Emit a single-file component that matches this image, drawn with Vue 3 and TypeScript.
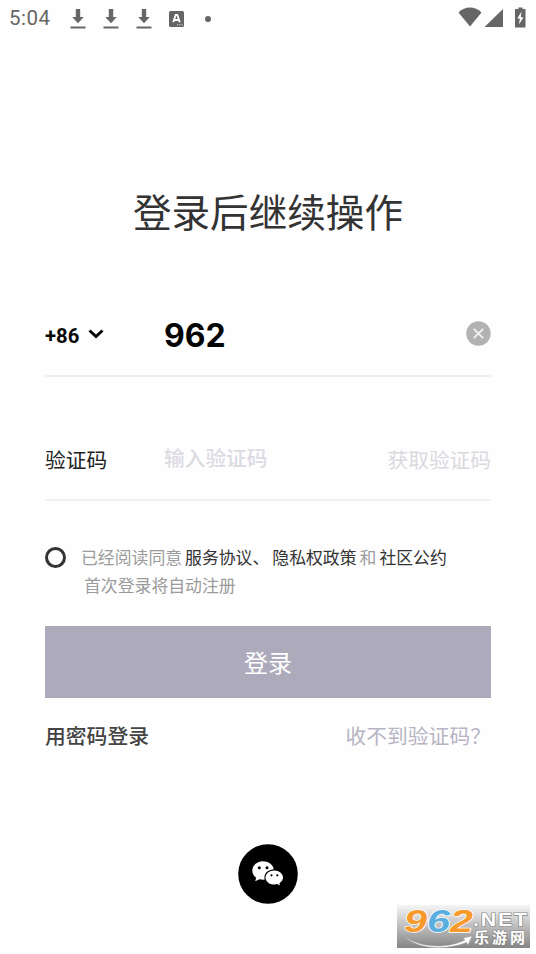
<script setup lang="ts">
import { ref } from 'vue'

const phone = ref<string>('962')
const code = ref<string>('')
const agreed = ref<boolean>(false)
const downloads: number[] = [1, 2, 3]
</script>

<template>
  <main class="screen">
    <header class="status">
      <span class="time">5:04</span>
      <svg v-for="n in downloads" :key="n" class="download" viewBox="0 0 16 22">
        <path d="M5.8 1h4.4v8h3.6L8 15.3 2.2 9h3.6zM0.5 18.6h15v1.8h-15z" fill="#666" />
      </svg>
      <svg class="badge" viewBox="0 0 15 16">
        <rect width="15" height="16" rx="1.6" fill="#666" />
        <path d="M4.200 11.2 6.700 4h1.600l2.500 7.2M5.200 9h4.600" fill="none" stroke="#fff" stroke-width="1.8" />
        <path d="M8 13.8h1.2m1 0h1.2m1 0h1.2" stroke="#ddd" stroke-width="1" />
      </svg>
      <span class="dot"></span>
      <span class="spacer"></span>
      <svg class="signals" viewBox="0 0 70 24">
        <path d="M0.5 6.5C7-.2 17-.2 23.500 6.500L12 20.500z" fill="#666" />
        <path d="M45 3v18H26.500z" fill="#666" />
        <path d="M60.500 1.500h4V3h3v18.500H57V3h3.500z" fill="#666" />
        <path d="m63.500 5.500-4.200 7h2.500l-.8 6 4.500-7.300h-2.700z" fill="#fff" />
      </svg>
    </header>

    <h1 class="title">登录后继续操作</h1>

    <form class="form" @submit.prevent>
      <div class="field phone-field">
        <div class="region">
          <span>+86</span>
          <svg class="chevron" viewBox="0 0 16 10"><path d="m1.500 1.500 6.500 6 6.500-6" fill="none" stroke="#0a0a0a" stroke-width="3" /></svg>
        </div>
        <input v-model="phone" class="input number" aria-label="+86" />
        <svg class="clear" viewBox="0 0 25 25" @click="phone = ''">
          <circle cx="12.500" cy="12.500" r="12.200" fill="#b2b2b2" />
          <path d="m7.800 7.800 9.400 9.400m0-9.400-9.400 9.400" stroke="#f2f2f2" stroke-width="1.800" />
        </svg>
      </div>

      <div class="field code-field">
        <label class="label">验证码</label>
        <input v-model="code" class="input code" placeholder="输入验证码" />
        <span class="get-code">获取验证码</span>
      </div>

      <div class="agreement">
        <span class="radio" @click="agreed = !agreed"></span>
        <div class="terms">
          <p class="line">已经阅读同意<a class="first">服务协议、</a><a class="second">隐私权政策</a><span class="and">和</span><a>社区公约</a></p>
          <p class="line note">首次登录将自动注册</p>
        </div>
      </div>

      <button class="submit">登录</button>
      <div class="links">
        <a class="password">用密码登录</a>
        <a class="help">收不到验证码？</a>
      </div>
    </form>

    <div class="social">
      <svg viewBox="0 0 60 60">
        <circle cx="30" cy="30" r="29.800" fill="#000" />
        <path d="M25 17.300c-6 0-10.700 4-10.700 9.200 0 3 1.500 5.500 3.900 7.200l-1 3.600 4.200-2.100c1.100.3 2.300.5 3.600.5 6 0 10.800-4.100 10.800-9.200S31 17.300 25 17.300z" fill="#fff" />
        <path d="M36.300 25.200c-5.500 0-9.900 3.600-9.900 8.200s4.400 8.300 9.900 8.300c1.100 0 2.100-.1 3-.4l3.500 1.800-.8-3c2.500-1.500 4.100-3.900 4.100-6.700 0-4.600-4.400-8.200-9.800-8.200z" fill="#000" />
        <path d="M36.300 26.400c-4.900 0-8.800 3.200-8.800 7.100s3.900 7.100 8.800 7.100c1.100 0 2.100-.2 3-.5l2.700 1.500-.6-2.400c2.200-1.300 3.600-3.400 3.600-5.700 0-3.900-3.900-7.100-8.700-7.100z" fill="#fff" />
        <g fill="#000">
          <circle cx="21.300" cy="23.800" r="1.500" /><circle cx="29" cy="23.800" r="1.500" />
          <circle cx="33.500" cy="31.300" r="1.100" /><circle cx="39.300" cy="31.300" r="1.100" />
        </g>
      </svg>
    </div>

    <svg class="watermark" viewBox="0 0 133 43">
      <defs>
        <linearGradient id="fade" x1="0" y1="0" x2="0" y2="1">
          <stop offset="0" stop-color="#f5f5f5" /><stop offset="1" stop-color="#858585" />
        </linearGradient>
      </defs>
      <rect width="133" height="43" fill="url(#fade)" />
      <path d="M7 31c15 12 43 13 61 4l-2-2 9-2-4 9-1.500-2.500C48 46 19 44 7 31z" fill="#fff" stroke="#999" stroke-width=".5" />
      <g class="digits" stroke="#fff" stroke-width="1.500" paint-order="stroke" stroke-linejoin="round">
        <text x="7" y="27" textLength="23" lengthAdjust="spacingAndGlyphs" fill="#f79a2b">9</text>
        <text x="30" y="27" textLength="23" lengthAdjust="spacingAndGlyphs" fill="#5aaee0">6</text>
        <text x="53" y="27" textLength="23" lengthAdjust="spacingAndGlyphs" fill="#f79a2b">2</text>
      </g>
      <g fill="#fff" stroke="#858585" stroke-width="1.200" paint-order="stroke">
        <text class="net" x="76" y="20.500" textLength="56" lengthAdjust="spacingAndGlyphs">.NET</text>
        <text class="brand" x="77" y="38" textLength="51">乐游网</text>
      </g>
    </svg>
  </main>
</template>

<style>
body { background: #fefefe; }
</style>

<style scoped>
* { box-sizing: border-box; }
.screen {
  position: relative;
  width: 536px;
  height: 954px;
  overflow: hidden;
  background: #fefefe;
  color: #333;
  font-family: "Noto Sans CJK SC", sans-serif;
}
.status {
  display: flex;
  align-items: center;
  height: 37px;
  padding: 0 8px 0 9px;
}
.time { width: 61px; color: #666; font: 400 20.500px/37px Roboto, sans-serif; letter-spacing: .5px; }
.download { width: 16px; height: 22px; margin-right: 16.900px; }
.badge { width: 15px; height: 16px; margin-right: 21px; }
.dot { width: 6px; height: 6px; border-radius: 50%; background: #666; }
.spacer { flex: 1; }
.signals { width: 70px; height: 24px; margin-top: -2px; }
.title {
  margin: 143px 0 0;
  color: #333;
  font-size: 38.600px;
  font-weight: 400;
  line-height: 60px;
  text-align: center;
}
.form { display: flex; flex-direction: column; margin: 0 45px; }
.field { display: flex; align-items: center; border-bottom: 2px solid #f0f0f0; }
.phone-field { height: 84px; margin-top: 53px; }
.region {
  display: flex;
  align-items: center;
  gap: 9px;
  width: 119px;
  margin-top: 3px;
  color: #0a0a0a;
  font: 700 20.300px/30px Roboto, sans-serif;
}
.chevron { width: 16px; height: 10px; margin-top: -3px; }
.input { flex: 1; min-width: 0; padding: 0; border: 0; outline: 0; background: none; }
.number { height: 40px; margin-top: 3px; color: #050505; font: 700 32px/40px Inter, sans-serif; }
.clear { width: 25px; height: 25px; margin-top: -1px; }
.code-field { height: 80px; margin-top: 44px; padding-bottom: 2px; font-size: 20.700px; }
.label { width: 119px; color: #222; }
.code { height: 32px; margin-top: -4px; font: 500 20.700px/32px "Noto Sans CJK SC", sans-serif; }
.code::placeholder { color: #dcdae3; opacity: 1; }
.get-code { color: #dad9df; }
.agreement { display: flex; height: 125px; padding-top: 42px; }
.radio { width: 21px; height: 21px; margin-top: 4px; border: 3px solid #333; border-radius: 50%; }
.terms { margin-left: 15px; }
.line { margin: 0; color: #9b9b9b; font-size: 16.850px; line-height: 28px; white-space: nowrap; }
.line a { color: #333; }
.first { margin-left: 3px; }
.second { margin-left: 3px; }
.and { margin: 0 3px; }
.note { padding-left: 3px; }
.submit {
  height: 72px;
  padding: 0 0 1px;
  border: 0;
  background: #adaabb;
  color: #fff;
  font: 400 24px/35px "Noto Sans CJK SC", sans-serif;
}
.links { display: flex; justify-content: space-between; margin-top: 21px; font-size: 20.800px; line-height: 32px; }
.password { color: #444; font-weight: 500; }
.help { color: #b7b4c4; }
.social { display: flex; justify-content: center; margin-top: 93px; }
.social svg { width: 60px; height: 60px; }
.watermark { position: absolute; left: 397px; top: 905px; width: 133px; height: 43px; overflow: visible; }
.digits { font: italic 700 32px "Liberation Sans", sans-serif; }
.net { font: 700 17.500px "Liberation Sans", sans-serif; letter-spacing: 1.500px; }
.brand { font: 700 15px "Noto Sans CJK SC", sans-serif; }
</style>
